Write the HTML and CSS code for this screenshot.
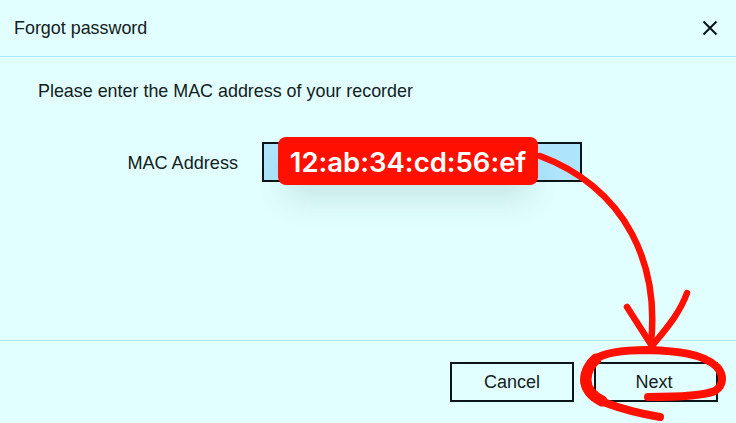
FILE: index.html
```html
<!DOCTYPE html>
<html lang="en">
<head>
    <meta charset="UTF-8">
    <link rel="stylesheet" href="styles.css">
    <title>Forgot password</title>
</head>
<body>

<div class="dialog">
    <div class="header">
        <span class="title">Forgot password</span>
        <svg class="close" width="16" height="16" viewBox="0 0 16 16">
            <path d="M1.5 1.5L14.5 14.5M14.5 1.5L1.5 14.5" stroke="#0b1416" stroke-width="2" fill="none"/>
        </svg>
    </div>

    <div class="content">
        <p class="intro">Please enter the MAC address of your recorder</p>
        <div class="field-row">
            <label class="field-label">MAC Address</label>
            <div class="field"></div>
        </div>
    </div>

    <div class="footer">
        <button class="btn">Cancel</button>
        <button class="btn btn-next">Next</button>
    </div>

    <div class="mac-badge">12:ab:34:cd:56:ef</div>

    <svg class="scribble" width="736" height="423" viewBox="0 0 736 423">
        <path d="M540 156C578 170 612 196 632 234C650 268 655 305 651 343" class="ink-thin"/>
        <path d="M627 307L652 346C664 331 679 315 687 293" class="ink-thin"/>
        <path d="M648 397C675 397 703 396 715 391C724 385 724 375 717 367C703 353 675 351 648 350C624 350 604 352 594 360C587 366 584 373 584 380C584 390 594 399 606 403C622 409 642 414 660 417" class="ink"/>
        <path d="M596 359C589 365 586 372 586 380C586 389 592 396 602 401" class="ink-heavy"/>
    </svg>
</div>

</body>
</html>
```

FILE: styles.css
```css
body {
    margin: 0;
    font-family: "Liberation Sans", Arial, sans-serif;
    color: #122022;
    background-color: #e2ffff;
}

.dialog {
    position: relative;
    width: 736px;
    height: 423px;
    display: flex;
    flex-direction: column;
    overflow: hidden;
}

.header {
    height: 57px;
    box-sizing: border-box;
    padding: 0 18px 0 14px;
    display: flex;
    align-items: center;
    justify-content: space-between;
    border-bottom: 1px solid #aeeafc;
}

.title {
    font-size: 17.9px;
}

.content {
    height: 284px;
    box-sizing: border-box;
    padding-top: 24px;
    border-bottom: 1px solid #aeeafc;
}

.intro {
    margin: 0 0 0 38px;
    font-size: 17.9px;
    line-height: 20px;
}

.field-row {
    margin-top: 41px;
    display: flex;
    align-items: center;
}

.field-label {
    width: 238px;
    padding-top: 2px;
    text-align: right;
    font-size: 18.1px;
}

.field {
    margin-left: 24px;
    width: 320px;
    height: 40px;
    box-sizing: border-box;
    border: 2px solid #0b1416;
    background-color: #aee5fd;
}

.footer {
    padding: 21px 18px 0 0;
    display: flex;
    justify-content: flex-end;
    gap: 20px;
}

.btn {
    width: 124px;
    height: 40px;
    padding: 0;
    border: 2px solid #0b1416;
    background-color: #e2ffff;
    color: #122022;
    font-family: inherit;
    font-size: 18px;
}

.btn-next {
    padding-right: 4px;
}

/* annotations over the dialog */
.mac-badge {
    position: absolute;
    left: 278px;
    top: 137px;
    width: 260px;
    height: 48px;
    border-radius: 8px;
    background-color: #ff1000;
    color: #fff;
    font-family: Inter, "Liberation Sans", sans-serif;
    font-size: 27.5px;
    font-weight: 600;
    line-height: 50px;
    text-align: center;
    box-shadow: 0 22px 30px -8px rgba(40, 90, 90, 0.16);
}

.scribble {
    position: absolute;
    left: 0;
    top: 0;
}

.ink, .ink-thin, .ink-heavy {
    fill: none;
    stroke: #ff1000;
    stroke-linecap: round;
    stroke-linejoin: round;
}

.ink {
    stroke-width: 8;
}

.ink-thin {
    stroke-width: 6.5;
}

.ink-heavy {
    stroke-width: 11;
}
```
